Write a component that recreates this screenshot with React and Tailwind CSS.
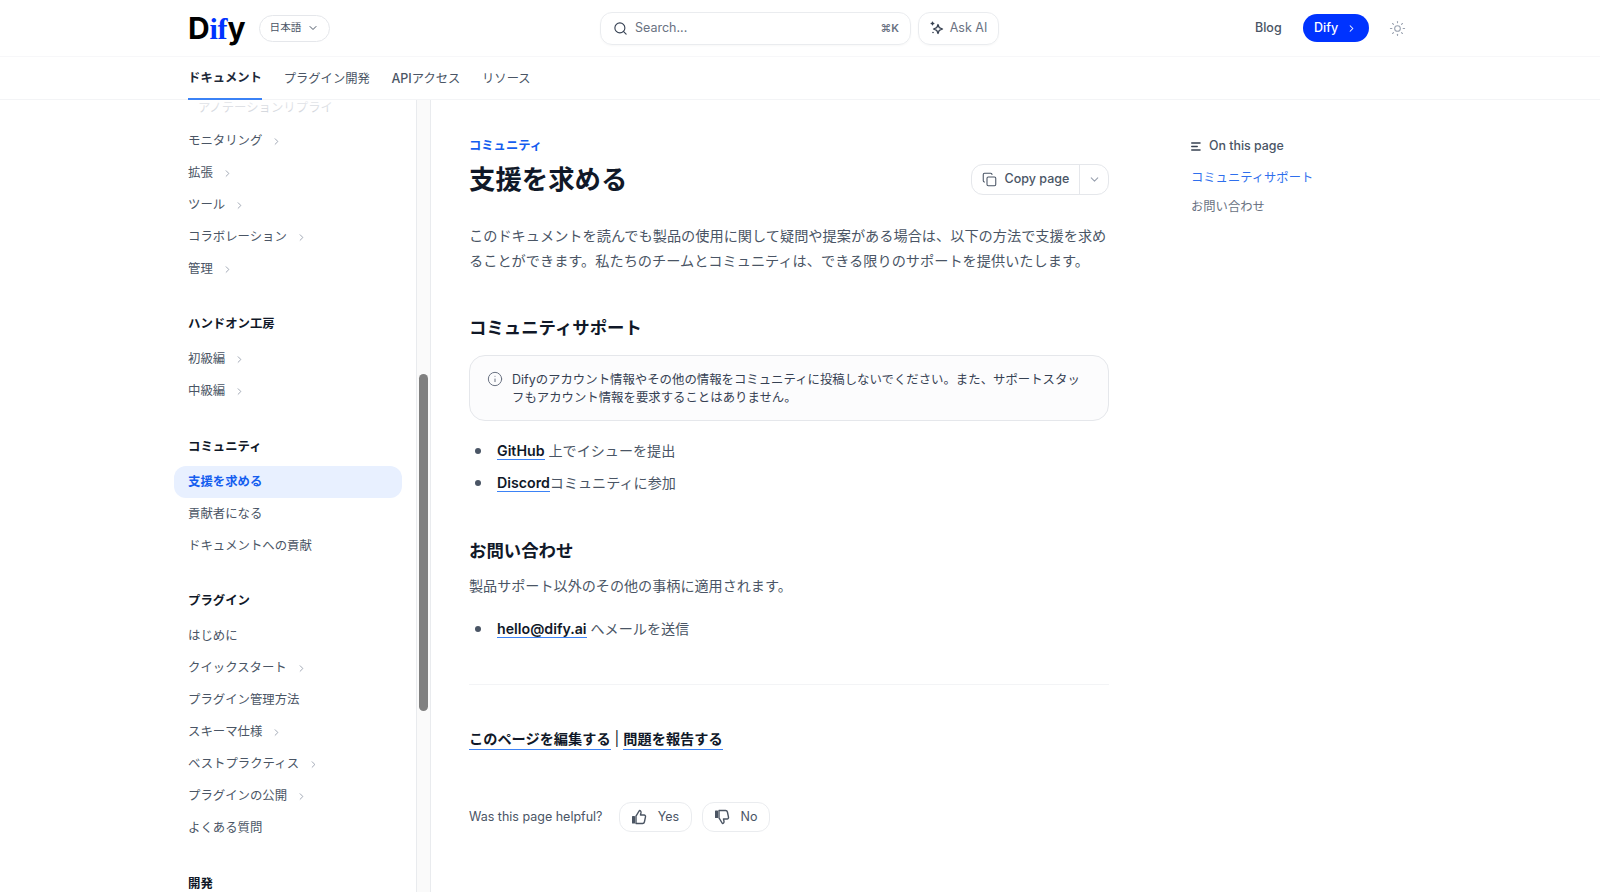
import { ChevronDown, ChevronRight, Copy, Info, Search, Sun } from 'lucide-react'

const SIDEBAR = [
  {
    items: [
      { label: 'モニタリング', more: true },
      { label: '拡張', more: true },
      { label: 'ツール', more: true },
      { label: 'コラボレーション', more: true },
      { label: '管理', more: true },
    ],
  },
  {
    title: 'ハンドオン工房',
    items: [
      { label: '初級編', more: true },
      { label: '中級編', more: true },
    ],
  },
  {
    title: 'コミュニティ',
    items: [
      { label: '支援を求める', active: true },
      { label: '貢献者になる' },
      { label: 'ドキュメントへの貢献' },
    ],
  },
  {
    title: 'プラグイン',
    items: [
      { label: 'はじめに' },
      { label: 'クイックスタート', more: true },
      { label: 'プラグイン管理方法' },
      { label: 'スキーマ仕様', more: true },
      { label: 'ベストプラクティス', more: true },
      { label: 'プラグインの公開', more: true },
      { label: 'よくある質問' },
    ],
  },
  { title: '開発', items: [] },
]

function SparkleIcon() {
  return (
    <svg width="14" height="14" viewBox="0 0 14 14" fill="none" stroke="#374151" strokeWidth="1.3" strokeLinejoin="round">
      <path d="M8 3.5 9.3 6.7 12.5 8 9.3 9.3 8 12.5 6.7 9.3 3.5 8 6.7 6.7Z" />
      <path d="M2.5 1.2v2.6M1.2 2.5h2.6" strokeLinecap="round" />
      <path d="M3 11.5h.01" strokeLinecap="round" strokeWidth="1.6" />
    </svg>
  )
}

function ThumbUp() {
  return (
    <svg width="16" height="16" viewBox="0 0 16 16" fill="none" stroke="#4b5563" strokeWidth="1.4" strokeLinejoin="round">
      <rect x="1" y="7" width="3" height="7.5" rx="0.6" fill="#4b5563" stroke="none" />
      <path d="M5 7.2 8.4 1.5c1.1.1 1.8 1 1.6 2.2L9.5 6h3.6c1 0 1.6.9 1.4 1.8l-1.1 5.2c-.2.9-.9 1.5-1.8 1.5H5Z" />
    </svg>
  )
}

function ThumbDown() {
  return (
    <svg width="16" height="16" viewBox="0 0 16 16" fill="none" stroke="#4b5563" strokeWidth="1.4" strokeLinejoin="round">
      <rect x="1" y="1.5" width="3" height="7.5" rx="0.6" fill="#4b5563" stroke="none" />
      <path d="M5 8.8 8.4 14.5c1.1-.1 1.8-1 1.6-2.2L9.5 10h3.6c1 0 1.6-.9 1.4-1.8L13.4 3c-.2-.9-.9-1.5-1.8-1.5H5Z" />
    </svg>
  )
}

function TocIcon() {
  return (
    <svg width="10" height="9" viewBox="0 0 10 9" fill="none" stroke="#374151" strokeWidth="1.3" strokeLinecap="round">
      <path d="M.7 1h8.4M.7 4.5h5.6M.7 8h8.4" />
    </svg>
  )
}

function Header() {
  return (
    <div className="flex h-[56px] items-center pl-[188px] pr-[188px]">
      <div className="flex w-[412px] shrink-0 items-center">
        <span className="w-[71px] text-[30px] leading-none font-bold tracking-[-0.2px] text-black">
          D<span className="font-['Liberation_Serif',serif] text-[#0033ff]">if</span>y
        </span>
        <button className="flex h-[27px] w-[71px] items-center justify-center gap-1.5 rounded-full border border-gray-200 text-[10.6px] text-gray-600">
          日本語
          <ChevronDown size={12} strokeWidth={2} />
        </button>
      </div>
      <div className="flex h-[33px] w-[311px] items-center rounded-xl border border-gray-200/80 pr-[11px] pl-[12px] shadow-[0_1px_2px_rgba(0,0,0,0.03)]">
        <Search size={15} strokeWidth={1.8} className="text-gray-700" />
        <span className="ml-[7px] text-[12.5px] text-gray-500">Search...</span>
        <span className="ml-auto text-[11px] font-semibold text-gray-500">⌘K</span>
      </div>
      <div className="ml-[7px] flex h-[33px] w-[81px] items-center justify-center gap-[6px] rounded-xl border border-gray-200/80 text-[12.5px] text-gray-500 shadow-[0_1px_2px_rgba(0,0,0,0.03)]">
        <SparkleIcon />
        Ask AI
      </div>
      <span className="ml-[256px] text-[12.5px] font-medium text-gray-600">Blog</span>
      <button className="ml-[21px] flex h-[28px] w-[66px] items-center justify-center gap-[8px] rounded-full bg-[#0033ff] text-[12.5px] font-medium text-white">
        Dify
        <ChevronRight size={11} strokeWidth={2.2} />
      </button>
      <Sun size={17} strokeWidth={1.5} className="ml-[20px] text-gray-400" />
    </div>
  )
}

function Tabs() {
  return (
    <div className="flex h-[43px] gap-[21.7px] border-b border-gray-100 pl-[188px] text-[12.3px] text-gray-600">
      <div className="flex h-[43px] w-[74px] items-center justify-center border-b-2 border-[#3b82f6] pt-[2px] font-semibold text-gray-800">
        ドキュメント
      </div>
      <div className="flex items-center pt-[2px]">プラグイン開発</div>
      <div className="flex items-center pt-[2px]">
        <span className="text-[12.5px] font-medium">API</span>アクセス
      </div>
      <div className="flex items-center pt-[2px]">リソース</div>
    </div>
  )
}

function SidebarRow({ label, more, active }) {
  return (
    <div
      className={`flex h-[32px] items-center gap-[9px] rounded-xl px-[14px] ${
        active ? 'bg-[#e8f0ff] font-semibold text-[#155eef]' : 'text-gray-600'
      }`}
    >
      {label}
      {more && <ChevronRight size={11} strokeWidth={2} className="text-gray-400" />}
    </div>
  )
}

function Sidebar() {
  return (
    <aside className="relative w-[242px] shrink-0 overflow-hidden pr-[14px] text-[12.4px]">
      <div className="pointer-events-none absolute inset-x-0 top-0 h-[22px] bg-gradient-to-b from-white/80 to-white/40" />
      <div className="-mt-[8px]">
        <div className="flex h-[33px] items-center pl-[24px] text-gray-400">アノテーションリプライ</div>
        {SIDEBAR.map((section, i) => (
          <div key={i} className={section.title ? 'mt-[29.5px]' : ''}>
            {section.title && (
              <div className="mb-[9px] flex h-[20px] items-center px-[14px] font-semibold text-gray-900">
                {section.title}
              </div>
            )}
            {section.items.map((item) => (
              <SidebarRow key={item.label} {...item} />
            ))}
          </div>
        ))}
      </div>
    </aside>
  )
}

function Bullet({ children }) {
  return (
    <li className="flex h-[32px] items-center">
      <span className="mr-[16px] ml-[6px] h-[6px] w-[6px] rounded-full bg-gray-600" />
      <span className="text-[14.1px] text-gray-600">{children}</span>
    </li>
  )
}

function BulletLink({ children }) {
  return <span className="border-b border-[#3b82f6] text-[14.2px] font-semibold text-gray-900">{children}</span>
}

function Content() {
  return (
    <main className="ml-[38px] w-[640px] shrink-0 pt-[36px]">
      <div className="h-[20px] text-[12.3px] leading-[20px] font-semibold text-[#155eef]">コミュニティ</div>
      <div className="mt-[6px] flex h-[36px] items-center justify-between">
        <h1 className="text-[26.4px] font-bold text-gray-900">支援を求める</h1>
        <div className="mb-[2px] flex h-[31px] w-[138px] items-center rounded-xl border border-gray-200 text-[12.5px] font-medium text-gray-600">
          <div className="flex h-full w-[108px] items-center justify-center gap-[8px] border-r border-gray-200">
            <Copy size={15} strokeWidth={1.7} />
            Copy page
          </div>
          <ChevronDown size={13} strokeWidth={2} className="ml-[8px] text-gray-400" />
        </div>
      </div>
      <p className="mt-[26px] text-[14.2px] leading-[24.5px] text-gray-600">
        このドキュメントを読んでも製品の使用に関して疑問や提案がある場合は、以下の方法で支援を求めることができます。私たちのチームとコミュニティは、できる限りのサポートを提供いたします。
      </p>
      <h2 className="mt-[41px] text-[17.4px] leading-[28px] font-bold text-gray-900">コミュニティサポート</h2>
      <div className="mt-[13px] flex h-[66px] items-center rounded-2xl border border-gray-200 bg-gray-50/50 pr-[20px] pl-[17px]">
        <Info size={16} strokeWidth={1.5} className="-mt-[18px] shrink-0 text-gray-500" />
        <p className="mt-px ml-[9px] text-[12.4px] leading-[18px] text-gray-700">
          <span className="text-[12.5px]">Dify</span>のアカウント情報やその他の情報をコミュニティに投稿しないでください。また、サポートスタッフもアカウント情報を要求することはありません。
        </p>
      </div>
      <ul className="mt-[14px]">
        <Bullet>
          <BulletLink>GitHub</BulletLink> 上でイシューを提出
        </Bullet>
        <Bullet>
          <BulletLink>Discord</BulletLink>コミュニティに参加
        </Bullet>
      </ul>
      <h2 className="mt-[38px] text-[17.4px] leading-[28px] font-bold text-gray-900">お問い合わせ</h2>
      <p className="mt-[9px] text-[14.1px] leading-[24px] text-gray-600">製品サポート以外のその他の事柄に適用されます。</p>
      <ul className="mt-[15px]">
        <Bullet>
          <BulletLink>hello@dify.ai</BulletLink> へメールを送信
        </Bullet>
      </ul>
      <div className="mt-[39px] border-t border-gray-100" />
      <div className="mt-[42px] flex h-[24px] items-center gap-[4px] text-[14.2px] font-bold text-gray-900">
        <span className="border-b border-[#3b82f6]">このページを編集する</span>
        <span className="font-normal">|</span>
        <span className="border-b border-[#3b82f6]">問題を報告する</span>
      </div>
      <div className="mt-[51px] flex items-center text-[12.5px] text-gray-600">
        <span>Was this page helpful?</span>
        <button className="ml-[16px] flex h-[30px] w-[73px] items-center justify-center gap-[11px] rounded-xl border border-gray-200/80">
          <ThumbUp />
          Yes
        </button>
        <button className="ml-[10px] flex h-[30px] w-[68px] items-center justify-center gap-[11px] rounded-xl border border-gray-200/80">
          <ThumbDown />
          No
        </button>
      </div>
    </main>
  )
}

function Toc() {
  return (
    <nav className="ml-[82px] w-[220px] shrink-0 pt-[36px]">
      <div className="flex h-[20px] items-center gap-[8px] text-[12.4px] font-medium text-gray-600">
        <TocIcon />
        On this page
      </div>
      <div className="mt-[12px] h-[20px] text-[12.3px] leading-[20px] text-[#2f6fed]">コミュニティサポート</div>
      <div className="mt-[9px] h-[20px] text-[12.3px] leading-[20px] text-gray-500">お問い合わせ</div>
    </nav>
  )
}

export default function App() {
  return (
    <div className="flex h-screen flex-col overflow-hidden bg-white font-['Inter','Noto_Sans_CJK_JP',sans-serif]">
      <div className="border-b border-gray-100/70">
        <Header />
      </div>
      <Tabs />
      <div className="flex min-h-0 flex-1 pl-[174px]">
        <Sidebar />
        <div className="w-[15px] shrink-0 border-x border-gray-200/80 bg-[#fafafa] px-[2px]">
          <div className="mt-[274px] h-[337px] rounded-full bg-[#808080]" />
        </div>
        <Content />
        <Toc />
      </div>
    </div>
  )
}
